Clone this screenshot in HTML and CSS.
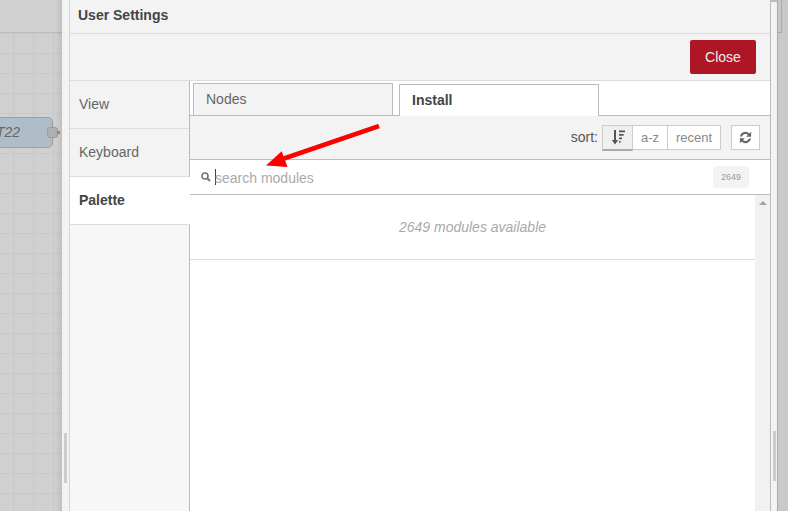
FILE: index.html
```html
<!DOCTYPE html>
<html lang="en">
<head>
<meta charset="utf-8">
<title>User Settings</title>
<link rel="stylesheet" href="styles.css">
</head>
<body>
<div class="desk">
  <div class="canvas">
    <div class="canvas-top"></div>
    <div class="canvas-grid">
      <div class="node"><span class="node-label">T22</span><span class="port"></span></div>
    </div>
  </div>
  <div class="strip strip-left"><span class="thumb thumb-left"></span></div>
  <main class="dialog">
    <div class="title">User Settings</div>
    <div class="buttons"><button class="close">Close</button></div>
    <div class="body">
      <nav class="side">
        <div class="side-tab">View</div>
        <div class="side-tab">Keyboard</div>
        <div class="side-tab active">Palette</div>
      </nav>
      <section class="content">
        <div class="tabs">
          <div class="tab">Nodes</div>
          <div class="tab current">Install</div>
        </div>
        <div class="toolbar">
          <span class="sort-label">sort:</span>
          <div class="group">
            <span class="tbtn sort-icon">
              <svg width="14" height="17" viewBox="0 0 14 16"><path d="M3 0.500h2v10h2.200L4 15 0.800 10.500H3z" fill="#555"/><path d="M8 1h6v1.800H8zM8 4.500h4.600v1.800H8zM8 8h3v1.800H8zM8 11.500h1.600v1.800H8z" fill="#555"/></svg>
            </span>
            <span class="tbtn sort-az">a-z</span>
            <span class="tbtn sort-recent">recent</span>
          </div>
          <span class="tbtn refresh">
            <svg width="13" height="13" viewBox="0 0 12 12"><path d="M0.800 5A5.300 5.300 0 0 1 9.600 2.200L11.200 0.800V5.400H6.600l1.700-1.700A3.400 3.400 0 0 0 2.800 5zM11.200 7A5.300 5.300 0 0 1 2.400 9.800L0.800 11.200V6.600H5.400L3.700 8.300A3.400 3.400 0 0 0 9.200 7z" fill="#666"/></svg>
          </span>
        </div>
        <div class="search">
          <svg class="lens" width="10" height="10" viewBox="0 0 10 10"><circle cx="4" cy="4" r="3" fill="none" stroke="#777" stroke-width="1.600"/><path d="M6.200 6.200L9 9" stroke="#777" stroke-width="2"/></svg>
          <span class="caret"></span>
          <span class="placeholder">search modules</span>
          <span class="count">2649</span>
        </div>
        <div class="list-wrap">
          <div class="list">
            <div class="available"><em>2649 modules available</em></div>
          </div>
          <div class="scroll"><span class="scroll-up"></span></div>
        </div>
      </section>
    </div>
  </main>
  <div class="strip strip-right"><span class="thumb thumb-right"></span></div>
  <div class="canvas-right"><div class="right-tab"></div><div class="right-rest"></div></div>
</div>
<svg class="arrow" width="130" height="60" viewBox="0 0 130 60"><path d="M113 2L18 34.500" stroke="#f00" stroke-width="4.500" fill="none"/><path d="M0 41.500L15.700 27.200 21.500 43z" fill="#f00"/></svg>
</body>
</html>
```
FILE: styles.css
```css
* { box-sizing: border-box; }
html, body { margin: 0; height: 100%; overflow: hidden; }
body { font-family: "Liberation Sans", Arial, sans-serif; font-size: 14px; color: #555; background: #d0d0d0; }
.desk { display: flex; height: 511px; }
.canvas { width: 62px; display: flex; flex-direction: column; background: #d0d0d0; position: relative; }
.canvas::after { content: ""; position: absolute; top: 0; bottom: 0; right: 0; width: 7px; background: linear-gradient(90deg, rgba(0,0,0,0), rgba(0,0,0,.08)); }
.canvas-top { height: 33px; flex: none; border-bottom: 1px solid #bdbdbd; }
.canvas-grid { flex: 1; position: relative;
  background-image: linear-gradient(#c8c8c8 1px, transparent 1px), linear-gradient(90deg, #c8c8c8 1px, transparent 1px);
  background-size: 20px 20px; background-position: 13px 0; }
.node { position: absolute; left: -20px; top: 84px; width: 73px; height: 31px; background: #aebdc8; border: 1px solid #9f9f9f; border-radius: 5px; }
.node-label { position: absolute; left: 15px; top: 6px; font-style: italic; font-size: 14px; color: #666; }
.port { position: absolute; right: -6px; top: 9px; width: 11px; height: 11px; background: #b0b0b0; border: 1px solid #9a9a9a; border-radius: 3px; }
.port::after { content: ""; position: absolute; left: 9px; top: 3px; width: 3px; height: 3px; background: #8f8f8f; }
.strip { flex: none; background: #f3f3f3; position: relative; }
.strip-left { width: 8px; border-right: 1px solid #d4d4d4; }
.strip-right { width: 8px; border-top: 2px solid #bbb; border-left: 1px solid #bbb; border-right: 1px solid #aaa; }
.thumb { position: absolute; width: 3px; height: 50px; background: #ccc; }
.thumb-left { left: 2px; top: 433px; }
.thumb-right { left: 2px; top: 429px; }
.canvas-right { flex: 1; background: #c9c9c9; display: flex; flex-direction: column; }
.right-tab { height: 33px; flex: none; width: 4px; border-right: 1px solid #aaa; border-bottom: 1px solid #aaa; }
.right-rest { flex: 1; }
.dialog { width: 700px; flex: none; display: flex; flex-direction: column; background: #f3f3f3; }
.title { height: 34px; flex: none; padding: 7px 8px 0; font-size: 14px; font-weight: bold; color: #444; border-bottom: 1px solid #ddd; }
.buttons { height: 47px; flex: none; display: flex; justify-content: flex-end; align-items: flex-start; padding: 6px 14px 0; border-bottom: 1px solid #ddd; }
.close { width: 66px; height: 34px; border: 0; border-radius: 2px; background: #ad1625; color: #eee; font: 14px "Liberation Sans", Arial, sans-serif; padding: 0; }
.body { flex: 1; display: flex; min-height: 0; }
.side { width: 120px; flex: none; background: #f7f7f7; border-right: 1px solid #bbb; }
.side-tab { height: 48px; padding: 15px 9px 0; background: #f3f3f3; border-bottom: 1px solid #ddd; color: #666; font-size: 14px; }
.side-tab.active { background: #fff; color: #444; font-weight: bold; margin-right: -1px; position: relative; }
.content { flex: 1; display: flex; flex-direction: column; min-width: 0; background: #fff; }
.tabs { height: 35px; flex: none; display: flex; align-items: flex-end; gap: 6px; padding-left: 3px; border-bottom: 1px solid #bbb; }
.tab { width: 200px; height: 32px; padding: 7px 12px 0; background: #f3f3f3; border: 1px solid #bbb; border-bottom: 0; color: #666; font-size: 14px; }
.tab.current { margin-bottom: -1px; background: #fff; color: #444; font-weight: bold; position: relative; }
.toolbar { height: 44px; flex: none; display: flex; align-items: flex-start; padding: 9px 10px 0 0; justify-content: flex-end; background: #f3f3f3; border-bottom: 1px solid #bbb; }
.sort-label { font-size: 14px; color: #555; margin-right: 4px; line-height: 25px; }
.group { display: flex; }
.tbtn { height: 25px; display: flex; align-items: center; justify-content: center; background: #fff; border: 1px solid #ccc; color: #888; font-size: 13px; }
.sort-icon { width: 31px; height: 26px; background: #efefef; border-bottom: 2px solid #aaa; }
.sort-az { width: 36px; margin-left: -1px; }
.sort-recent { width: 54px; margin-left: -1px; }
.refresh { width: 29px; margin-left: 10px; }
.search { height: 35px; flex: none; display: flex; align-items: center; padding-left: 11px; padding-right: 21px; border-bottom: 1px solid #bbb; }
.lens { flex: none; }
.caret { width: 1px; height: 16px; background: #444; margin-left: 4px; }
.placeholder { font-size: 14px; color: #aaa; flex: 1; margin-left: -1px; padding-top: 2px; }
.count { width: 36px; height: 22px; display: flex; align-items: center; justify-content: center; background: #f3f3f3; border-radius: 4px; font-size: 9px; color: #999; }
.list-wrap { flex: 1; display: flex; min-height: 0; }
.list { flex: 1; min-width: 0; }
.available { height: 65px; display: flex; align-items: center; justify-content: center; border-bottom: 1px solid #ddd; color: #aaa; font-size: 14px; }
.scroll { width: 15px; flex: none; background: #f1f1f1; padding-top: 6px; display: flex; justify-content: center; align-items: flex-start; }
.scroll-up { width: 0; height: 0; border: 4px solid transparent; border-top: 0; border-bottom: 4px solid #a3a3a3; }
.arrow { position: absolute; left: 266px; top: 124px; }
```
